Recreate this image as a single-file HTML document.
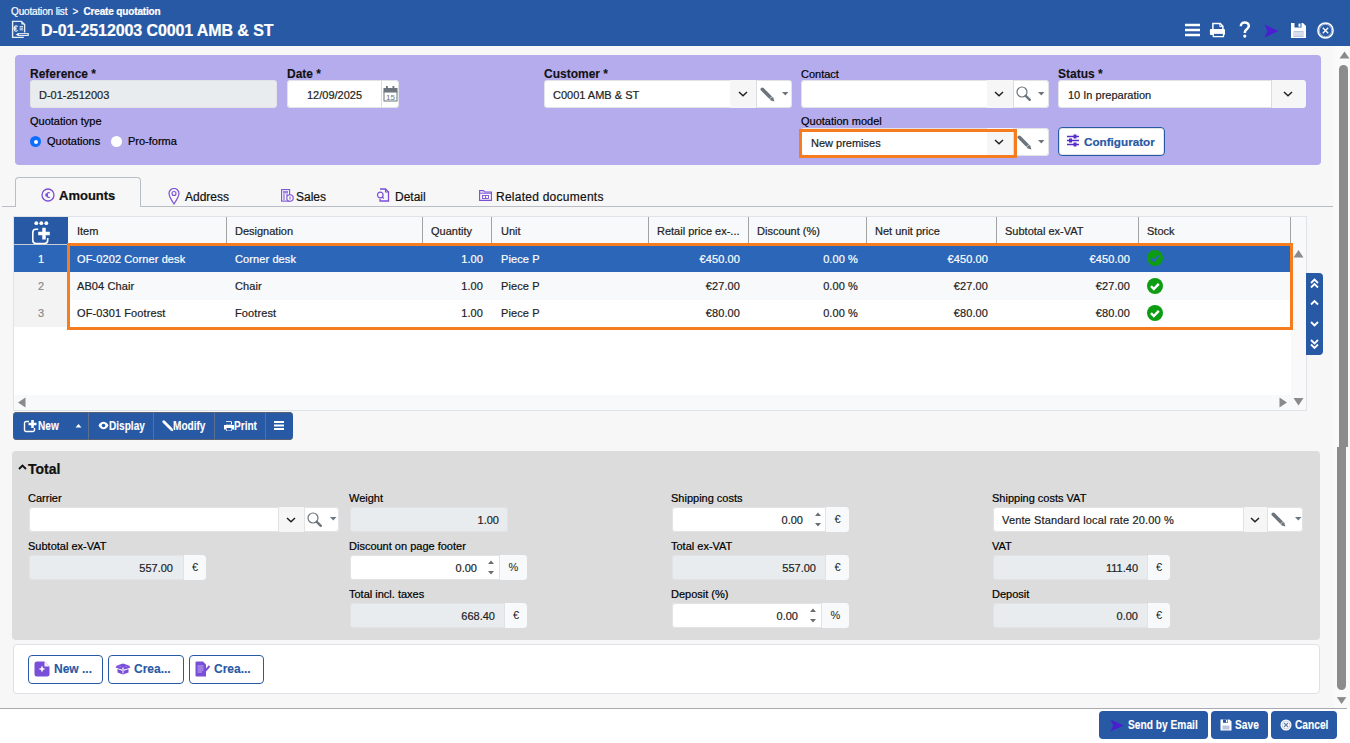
<!DOCTYPE html>
<html><head><meta charset="utf-8">
<style>
*{box-sizing:border-box;margin:0;padding:0}
html,body{width:1350px;height:743px;overflow:hidden}
body{position:relative;background:#fff;font-family:"Liberation Sans",sans-serif;color:#212529}
.a{position:absolute}
#page{position:absolute;left:0;top:0;width:1350px;height:708px;background:#f7f7f7}
#hdr{position:absolute;left:0;top:0;width:1350px;height:46px;background:#2759a5;color:#fff}
.lbl{position:absolute;margin-top:2px;font-size:11px;white-space:nowrap;color:#000}
.lblb{position:absolute;margin-top:2px;font-size:12px;font-weight:bold;white-space:nowrap;color:#111}
.inp{position:absolute;background:#fff;border-radius:4px;box-shadow:inset 0 0 0 1px #e1e3e7;font-size:11px;white-space:nowrap;color:#222}
.ro{background:#e9ecef}
.txt{position:absolute;white-space:nowrap}
.txt,.lbl{-webkit-text-stroke:0.2px currentColor}
.lblb,.tb,.fb,.bb{-webkit-text-stroke:0.1px currentColor}
.inp>.txt{margin-top:1px}
.th{font-size:11px;color:#222}
.td{font-size:11px;letter-spacing:0.1px;margin-top:1.5px}
.tb{font-size:12px;font-weight:bold;color:#fff;transform:scaleX(0.84);transform-origin:0 0;margin-top:-1px}
.bb{font-size:12px;font-weight:bold;color:#2759a5}
.fb{font-size:12px;font-weight:bold;color:#fff;transform:scaleX(0.85);transform-origin:0 0;margin-top:0px}
.dd{position:absolute;top:0;bottom:0;background:#f6f6f6;border-left:1px solid #e2e2e2;border-right:1px solid #e2e2e2}
</style></head><body>
<div id="page">
<div id="hdr">
  <div class="txt" style="left:11px;top:6px;font-size:10px;letter-spacing:-0.15px">Quotation list&nbsp;&nbsp;&gt;&nbsp;&nbsp;<b>Create quotation</b></div>
  <div class="txt" style="left:41px;top:22px;font-size:16px;font-weight:bold;letter-spacing:-0.1px">D-01-2512003 C0001 AMB &amp; ST</div>
<svg class="a" style="left:11px;top:20px" width="19" height="19" viewBox="0 0 19 19" fill="none">
<path d="M13.6 12.5V4.6L10.4 1.4H1.6V17.4H12.8" stroke="#e8edf5" stroke-width="1.4"/>
<path d="M10.4 1.4V4.6H13.6Z" fill="#e8edf5"/>
<path d="M6.6 6.6a2.2 2.6 0 1 0 0 3.8M2.6 7.9H5.6M2.6 9.1H5.6" stroke="#e8edf5" stroke-width="1.1"/>
<path d="M8.6 6.6H12M8.6 8.2H12M8.6 9.8H12" stroke="#e8edf5" stroke-width="1"/>
<path d="M4.6 14.4L7.2 12.9H17.8V15.9H7.2Z" fill="#e8edf5"/><path d="M8 14.4H16.6" stroke="#2759a5" stroke-width="0.9"/>
</svg>
<svg class="a" style="left:1185px;top:23px" width="15" height="14"><path d="M0 2H15M0 7H15M0 12H15" stroke="#fff" stroke-width="2.4"/></svg>
<svg class="a" style="left:1209px;top:22px" width="17" height="16" viewBox="0 0 17 16"><path d="M3.9 7V1.6H11.3L13.9 4.2V7" stroke="#fff" stroke-width="1.5" fill="none"/><path d="M10.8 1.6V4.6H13.9" stroke="#fff" stroke-width="1" fill="none"/><rect x="0.9" y="6.9" width="15.1" height="6.2" rx="1" fill="#fff"/><rect x="4.3" y="11.2" width="10.2" height="3.4" fill="#2759a5" stroke="#fff" stroke-width="1.3"/></svg>
<svg class="a" style="left:1239px;top:21px" width="12" height="17" viewBox="0 0 12 17"><path d="M1.8 5.2C1.8 2.6 3.6 1.4 5.7 1.4S9.8 2.7 9.8 4.9C9.8 7 8.2 7.9 7 8.9C6.1 9.7 5.8 10.3 5.8 12" stroke="#fff" stroke-width="2.5" fill="none"/><circle cx="5.8" cy="15.1" r="1.6" fill="#fff"/></svg>
<svg class="a" style="left:1264px;top:24px" width="15" height="14" viewBox="0 0 15 14"><path d="M0.5 0.5L14.5 7L0.5 13.5L3.5 7Z" fill="#4b1fd0"/></svg>
<svg class="a" style="left:1290px;top:22px" width="17" height="17" viewBox="0 0 17 17"><path d="M1 1H13L16 4V16H1Z" fill="#fff"/><rect x="4.5" y="1" width="7" height="4.5" fill="#2759a5"/><rect x="8.5" y="1.6" width="2" height="3.2" fill="#fff"/><rect x="3.5" y="9" width="10" height="6" fill="#b9c6e0"/><path d="M4 11H13M4 13H13" stroke="#fff" stroke-width="0.8"/></svg>
<svg class="a" style="left:1317px;top:22px" width="17" height="17" viewBox="0 0 17 17"><circle cx="8.5" cy="8.5" r="7.6" stroke="#fff" stroke-width="1.5" fill="none"/><circle cx="8.5" cy="8.5" r="6.2" stroke="#fff" stroke-width="0.6" fill="none"/><path d="M5.8 5.8L11.2 11.2M11.2 5.8L5.8 11.2" stroke="#fff" stroke-width="1.3"/></svg>
</div>

<!-- purple panel -->
<div class="a" style="left:15px;top:55px;width:1306px;height:110px;background:#b4acec;border-radius:4px"></div>
<div class="lblb" style="left:30px;top:65px">Reference *</div>
<div class="inp ro" style="left:30px;top:80px;width:247px;height:28px"><span class="txt" style="left:9px;top:8px">D-01-2512003</span></div>
<div class="lblb" style="left:287px;top:65px">Date *</div>
<div class="inp" style="left:287px;top:80px;width:112px;height:28px"><span class="txt" style="left:20px;top:8px">12/09/2025</span></div>
<div class="lblb" style="left:544px;top:65px">Customer *</div>
<div class="inp" style="left:544px;top:80px;width:248px;height:28px"><span class="txt" style="left:9px;top:8px">C0001 AMB &amp; ST</span></div>
<div class="lbl" style="left:801px;top:66px">Contact</div>
<div class="inp" style="left:801px;top:80px;width:248px;height:28px"></div>
<div class="lblb" style="left:1058px;top:65px">Status *</div>
<div class="inp" style="left:1058px;top:80px;width:248px;height:28px"><span class="txt" style="left:10px;top:8px">10 In preparation</span></div>
<div class="lbl" style="left:30px;top:113px">Quotation type</div>
<div class="lbl" style="left:801px;top:113px">Quotation model</div>
<div class="inp" style="left:801px;top:128px;width:248px;height:28px"><span class="txt" style="left:10px;top:8px">New premises</span></div>
<div class="inp" style="left:1058px;top:127px;width:107px;height:29px;border:1px solid #2759a5;font-weight:bold;font-size:12px;color:#2759a5"><span class="txt" style="left:25px;top:6px;font-size:11.7px">Configurator</span></div>

<div class="dd" style="left:730px;top:80px;width:27px;height:28px;border-right:1px solid #d9dce0;border-left:none"></div>
<svg class="a" style="left:738px;top:91px" width="10" height="6"><path d="M1 1L5 4.8L9 1" stroke="#222" stroke-width="1.5" fill="none"/></svg>
<svg class="a" style="left:760px;top:87px" width="15" height="15" viewBox="0 0 15 15"><path d="M2.3 2.3L11 11" stroke="#6c757d" stroke-width="3.6" stroke-linecap="round"/><path d="M9.3 12.3L12.3 9.3" stroke="#fff" stroke-width="0.7"/><path d="M10.2 13.2L14.4 14.4L13.2 10.2Z" fill="#6c757d"/></svg>
<svg class="a" style="left:782px;top:92px" width="7" height="4"><path d="M0 0H6.5L3.25 3.5Z" fill="#6c757d"/></svg>
<div class="dd" style="left:987px;top:80px;width:27px;height:28px;border-right:1px solid #d9dce0;border-left:none"></div>
<svg class="a" style="left:994px;top:91px" width="10" height="6"><path d="M1 1L5 4.8L9 1" stroke="#222" stroke-width="1.5" fill="none"/></svg>
<svg class="a" style="left:1016px;top:86px" width="16" height="16" viewBox="0 0 16 16"><circle cx="6" cy="6" r="5" stroke="#6c757d" stroke-width="1.2" fill="none"/><path d="M9.8 9.8L13.8 13.8" stroke="#6c757d" stroke-width="2.4" stroke-linecap="round"/></svg>
<svg class="a" style="left:1038px;top:92px" width="7" height="4"><path d="M0 0H6.5L3.25 3.5Z" fill="#6c757d"/></svg>
<div class="dd" style="left:1271px;top:80px;width:35px;height:28px;border-left:1px solid #d9dce0;border-right:none;border-radius:0 4px 4px 0"></div>
<svg class="a" style="left:1283px;top:91px" width="10" height="6"><path d="M1 1L5 4.8L9 1" stroke="#222" stroke-width="1.5" fill="none"/></svg>
<div class="dd" style="left:987px;top:128px;width:27px;height:28px;border-right:1px solid #d9dce0;border-left:none"></div>
<svg class="a" style="left:994px;top:139px" width="10" height="6"><path d="M1 1L5 4.8L9 1" stroke="#222" stroke-width="1.5" fill="none"/></svg>
<svg class="a" style="left:1017px;top:135px" width="15" height="15" viewBox="0 0 15 15"><path d="M2.3 2.3L11 11" stroke="#6c757d" stroke-width="3.6" stroke-linecap="round"/><path d="M9.3 12.3L12.3 9.3" stroke="#fff" stroke-width="0.7"/><path d="M10.2 13.2L14.4 14.4L13.2 10.2Z" fill="#6c757d"/></svg>
<svg class="a" style="left:1038px;top:140px" width="7" height="4"><path d="M0 0H6.5L3.25 3.5Z" fill="#6c757d"/></svg>
<div class="a" style="left:381px;top:80px;width:1px;height:28px;background:#d9dce0"></div>
<svg class="a" style="left:383px;top:86px" width="15" height="16" viewBox="0 0 15 16"><rect x="0.5" y="2" width="14" height="4.5" fill="#6c757d"/><rect x="1" y="6" width="13" height="9" stroke="#6c757d" stroke-width="1" fill="#fff"/><rect x="3" y="0" width="1.8" height="3.5" fill="#6c757d"/><rect x="9.5" y="0" width="1.8" height="3.5" fill="#6c757d"/><text x="7.5" y="14" font-size="8" font-family="Liberation Sans" text-anchor="middle" fill="#6c757d">15</text></svg>
<div class="a" style="left:30px;top:136px;width:11px;height:11px;border-radius:50%;background:#0d6efd"></div><div class="a" style="left:33.5px;top:139.5px;width:4px;height:4px;border-radius:50%;background:#fff"></div>
<div class="lbl" style="left:47px;top:133px">Quotations</div>
<div class="a" style="left:111px;top:136px;width:11px;height:11px;border-radius:50%;background:#fff"></div>
<div class="lbl" style="left:128px;top:133px">Pro-forma</div>
<svg class="a" style="left:1066px;top:134px" width="14" height="13" viewBox="0 0 14 13"><path d="M1 2.5H13M1 6.5H13M1 10.5H13" stroke="#5a2dc9" stroke-width="1.3"/><rect x="7.5" y="0.5" width="3" height="4" fill="#5a2dc9"/><rect x="3" y="4.5" width="3" height="4" fill="#5a2dc9"/><rect x="7.5" y="8.5" width="3" height="4" fill="#5a2dc9"/></svg>
<div class="a" style="left:799px;top:129px;width:218px;height:29px;border:3px solid #f57c1f"></div>
<!-- tabs -->
<div class="a" style="left:2px;top:206px;width:1331px;height:1px;background:#b9bec6"></div>
<div class="a" style="left:15px;top:177px;width:126px;height:30px;background:#f7f7f7;border:1px solid #b9bec6;border-bottom:none;border-radius:4px 4px 0 0"></div>
<div class="txt" style="left:59px;top:188px;font-size:13px;font-weight:bold;color:#111">Amounts</div>
<div class="txt" style="left:185px;top:190px;font-size:12px;color:#111">Address</div>
<div class="txt" style="left:296px;top:190px;font-size:12px;color:#111">Sales</div>
<div class="txt" style="left:395px;top:190px;font-size:12px;color:#111">Detail</div>
<div class="txt" style="left:496px;top:190px;font-size:12px;color:#111;letter-spacing:0.25px">Related documents</div>

<svg class="a" style="left:41px;top:188px" width="14" height="14" viewBox="0 0 14 14"><circle cx="7" cy="7" r="6" stroke="#7a4fd8" stroke-width="1.3" fill="none"/><path d="M8.8 4.8a2.4 2.4 0 1 0 0 4.4M4.3 6.4H7M4.3 7.6H7" stroke="#7a4fd8" stroke-width="1.1" fill="none"/></svg>
<svg class="a" style="left:168px;top:188px" width="12" height="17" viewBox="0 0 12 17"><path d="M6 16C3 11.5 1 8.5 1 5.5a5 5 0 0 1 10 0C11 8.5 9 11.5 6 16Z" stroke="#7a4fd8" stroke-width="1.2" fill="none"/><circle cx="6" cy="5.5" r="2" stroke="#7a4fd8" stroke-width="1.1" fill="none"/></svg>
<svg class="a" style="left:281px;top:189px" width="13" height="13" viewBox="0 0 13 13"><rect x="0.6" y="0.6" width="8" height="11.5" stroke="#7a4fd8" stroke-width="1.1" fill="none"/><rect x="2" y="2" width="5" height="2.5" fill="#7a4fd8" opacity="0.7"/><path d="M2 6H4M5 6H7M2 8H4M2 10H4" stroke="#7a4fd8" stroke-width="1"/><circle cx="9" cy="9" r="3.2" fill="#f7f7f7" stroke="#7a4fd8" stroke-width="1.1"/><path d="M9 7.5V10.5" stroke="#7a4fd8" stroke-width="1"/></svg>
<svg class="a" style="left:376px;top:188px" width="14" height="14" viewBox="0 0 14 14"><path d="M4 1H9.5L12.5 4V13H4V11" stroke="#7a4fd8" stroke-width="1.3" fill="none"/><path d="M9.5 1V4H12.5" stroke="#7a4fd8" stroke-width="1.1" fill="none"/><circle cx="4.3" cy="7" r="2.8" stroke="#7a4fd8" stroke-width="1.2" fill="#f7f7f7"/><path d="M6 8.8L7.8 10.6" stroke="#7a4fd8" stroke-width="1.3"/></svg>
<svg class="a" style="left:479px;top:190px" width="13" height="11" viewBox="0 0 13 11"><path d="M0.6 10.4V0.6H4.5L5.8 2H12.4V10.4Z" stroke="#7a4fd8" stroke-width="1.1" fill="none"/><path d="M0.6 3.2H12.4" stroke="#7a4fd8" stroke-width="1"/><rect x="3.5" y="5.5" width="6" height="3" stroke="#7a4fd8" stroke-width="0.9" fill="none"/><path d="M6.5 5.5V8.5" stroke="#7a4fd8" stroke-width="0.9"/></svg>
<div class="a" style="left:1334px;top:46px;width:16px;height:662px;background:#fafafa"></div>
<svg class="a" style="left:1339px;top:51px" width="11" height="8"><path d="M0.5 7.5L5.5 0.5L10.5 7.5Z" fill="#8a8a8a"/></svg>
<div class="a" style="left:1339px;top:65px;width:9px;height:382px;background:#8c8c8c;border-radius:4.5px 4.5px 0 0"></div><div class="a" style="left:1337px;top:447px;width:9px;height:243px;background:#8c8c8c;border-radius:0 0 4.5px 4.5px"></div>
<svg class="a" style="left:1337px;top:697px" width="10" height="7"><path d="M0.3 0.3L4.6 6.6L8.9 0.3Z" fill="#8a8a8a" stroke="#8a8a8a" stroke-width="0.6" stroke-linejoin="round"/></svg>
<!-- table -->
<div class="a" style="left:13px;top:216px;width:1294px;height:195px;background:#fff;border:1px solid #dfe3e8"></div>
<div class="a" style="left:14px;top:217px;width:1292px;height:27px;background:#f8f9fa"></div>
<div class="a" style="left:14px;top:217px;width:54px;height:27px;background:#2759a5"></div>
<div class="a" style="left:226px;top:217px;width:1px;height:27px;background:#a3a3a3"></div>
<div class="a" style="left:422px;top:217px;width:1px;height:27px;background:#a3a3a3"></div>
<div class="a" style="left:491px;top:217px;width:1px;height:27px;background:#a3a3a3"></div>
<div class="a" style="left:648px;top:217px;width:1px;height:27px;background:#a3a3a3"></div>
<div class="a" style="left:748px;top:217px;width:1px;height:27px;background:#a3a3a3"></div>
<div class="a" style="left:866px;top:217px;width:1px;height:27px;background:#a3a3a3"></div>
<div class="a" style="left:996px;top:217px;width:1px;height:27px;background:#a3a3a3"></div>
<div class="a" style="left:1138px;top:217px;width:1px;height:27px;background:#a3a3a3"></div>
<div class="a" style="left:1290px;top:217px;width:1px;height:27px;background:#a3a3a3"></div>
<div class="txt th" style="left:77px;top:225px">Item</div>
<div class="txt th" style="left:235px;top:225px">Designation</div>
<div class="txt th" style="left:431px;top:225px">Quantity</div>
<div class="txt th" style="left:501px;top:225px">Unit</div>
<div class="txt th" style="left:657px;top:225px">Retail price ex-...</div>
<div class="txt th" style="left:757px;top:225px">Discount (%)</div>
<div class="txt th" style="left:875px;top:225px">Net unit price</div>
<div class="txt th" style="left:1005px;top:225px">Subtotal ex-VAT</div>
<div class="txt th" style="left:1147px;top:225px">Stock</div>
<div class="a" style="left:14px;top:244px;width:1277px;height:1px;background:#c9ccd1"></div>
<div class="a" style="left:14px;top:245px;width:1277px;height:27px;background:#2b66b8"></div>
<div class="a" style="left:14px;top:245px;width:54px;height:27px;background:#2b66b8"></div>
<div class="txt td" style="left:14px;width:54px;text-align:center;top:251px;color:#fff">1</div>
<div class="txt td" style="left:77px;top:251px;color:#fff">OF-0202 Corner desk</div>
<div class="txt td" style="left:235px;top:251px;color:#fff">Corner desk</div>
<div class="txt td" style="left:501px;top:251px;color:#fff">Piece P</div>
<div class="txt td" style="left:333px;width:150px;text-align:right;top:251px;color:#fff">1.00</div>
<div class="txt td" style="left:590px;width:150px;text-align:right;top:251px;color:#fff">€450.00</div>
<div class="txt td" style="left:708px;width:150px;text-align:right;top:251px;color:#fff">0.00 %</div>
<div class="txt td" style="left:838px;width:150px;text-align:right;top:251px;color:#fff">€450.00</div>
<div class="txt td" style="left:980px;width:150px;text-align:right;top:251px;color:#fff">€450.00</div>
<svg class="a" style="left:1147px;top:250px" width="16" height="16" viewBox="0 0 16 16"><circle cx="8" cy="8" r="8" fill="#0e9c12"/><path d="M4 8.2l2.8 2.8 5-5.2" stroke="#2b66b8" stroke-width="2.2" fill="none"/></svg>
<div class="a" style="left:68px;top:272px;width:1223px;height:28px;background:#f8f9fa"></div>
<div class="a" style="left:14px;top:272px;width:54px;height:28px;background:#f3f3f3"></div>
<div class="txt td" style="left:14px;width:54px;text-align:center;top:278px;color:#8a8a8a">2</div>
<div class="txt td" style="left:77px;top:278px;color:#222">AB04 Chair</div>
<div class="txt td" style="left:235px;top:278px;color:#222">Chair</div>
<div class="txt td" style="left:501px;top:278px;color:#222">Piece P</div>
<div class="txt td" style="left:333px;width:150px;text-align:right;top:278px;color:#222">1.00</div>
<div class="txt td" style="left:590px;width:150px;text-align:right;top:278px;color:#222">€27.00</div>
<div class="txt td" style="left:708px;width:150px;text-align:right;top:278px;color:#222">0.00 %</div>
<div class="txt td" style="left:838px;width:150px;text-align:right;top:278px;color:#222">€27.00</div>
<div class="txt td" style="left:980px;width:150px;text-align:right;top:278px;color:#222">€27.00</div>
<svg class="a" style="left:1147px;top:278px" width="16" height="16" viewBox="0 0 16 16"><circle cx="8" cy="8" r="8" fill="#0e9c12"/><path d="M4 8.2l2.8 2.8 5-5.2" stroke="#fff" stroke-width="2.4" fill="none"/></svg>
<div class="a" style="left:68px;top:300px;width:1223px;height:27px;background:#ffffff"></div>
<div class="a" style="left:14px;top:300px;width:54px;height:27px;background:#f3f3f3"></div>
<div class="txt td" style="left:14px;width:54px;text-align:center;top:305px;color:#8a8a8a">3</div>
<div class="txt td" style="left:77px;top:305px;color:#222">OF-0301 Footrest</div>
<div class="txt td" style="left:235px;top:305px;color:#222">Footrest</div>
<div class="txt td" style="left:501px;top:305px;color:#222">Piece P</div>
<div class="txt td" style="left:333px;width:150px;text-align:right;top:305px;color:#222">1.00</div>
<div class="txt td" style="left:590px;width:150px;text-align:right;top:305px;color:#222">€80.00</div>
<div class="txt td" style="left:708px;width:150px;text-align:right;top:305px;color:#222">0.00 %</div>
<div class="txt td" style="left:838px;width:150px;text-align:right;top:305px;color:#222">€80.00</div>
<div class="txt td" style="left:980px;width:150px;text-align:right;top:305px;color:#222">€80.00</div>
<svg class="a" style="left:1147px;top:305px" width="16" height="16" viewBox="0 0 16 16"><circle cx="8" cy="8" r="8" fill="#0e9c12"/><path d="M4 8.2l2.8 2.8 5-5.2" stroke="#fff" stroke-width="2.4" fill="none"/></svg>
<svg class="a" style="left:31px;top:220px" width="21" height="25" viewBox="0 0 21 25">
<circle cx="5.3" cy="3.2" r="1.9" fill="#fff"/><circle cx="10.3" cy="3.2" r="1.9" fill="#fff"/><circle cx="15.3" cy="3.2" r="1.9" fill="#fff"/>
<path d="M7.2 9.2 H5 a3.2 3.2 0 0 0 -3.2 3.2 V20.3 a3.2 3.2 0 0 0 3.2 3.2 H13.5 a3.2 3.2 0 0 0 3.2 -3.2 V18" stroke="#fff" stroke-width="1.6" fill="none"/>
<path d="M13 7.8 V19.4 M7.2 13.6 H18.8" stroke="#2759a5" stroke-width="5.6" fill="none"/><path d="M13 7.8 V19.4 M7.2 13.6 H18.8" stroke="#fff" stroke-width="3.5" fill="none"/></svg>
<div class="a" style="left:1291px;top:244px;width:15px;height:166px;background:#f9f9f9"></div>
<svg class="a" style="left:1293px;top:249px" width="11" height="9"><path d="M0.5 8.5 L5.5 1 L10.5 8.5Z" fill="#8a8a8a"/></svg>
<svg class="a" style="left:1293px;top:397px" width="11" height="9"><path d="M0.5 1 L5.5 8.5 L10.5 1Z" fill="#8a8a8a"/></svg>
<div class="a" style="left:14px;top:395px;width:1277px;height:15px;background:#f8f9fa"></div>
<svg class="a" style="left:17px;top:397px" width="9" height="11"><path d="M8.5 0.5 L1 5.5 L8.5 10.5Z" fill="#8a8a8a"/></svg>
<svg class="a" style="left:1279px;top:397px" width="9" height="11"><path d="M0.5 0.5 L8 5.5 L0.5 10.5Z" fill="#8a8a8a"/></svg>
<div class="a" style="left:1306px;top:273px;width:17px;height:82px;background:#2759a5;border-radius:0 4px 4px 0"></div>
<svg class="a" style="left:1306px;top:273px" width="17" height="82" viewBox="0 0 17 82" fill="none" stroke="#fff" stroke-width="1.8">
<path d="M5 10 L8.5 6.5 L12 10 M5 14.5 L8.5 11 L12 14.5"/>
<path d="M5 31.5 L8.5 28 L12 31.5"/>
<path d="M5 49 L8.5 52.5 L12 49"/>
<path d="M5 67 L8.5 70.5 L12 67 M5 71.5 L8.5 75 L12 71.5"/></svg>
<div class="a" style="left:67px;top:243px;width:1226px;height:87px;border:3px solid #f57c1f"></div>
<!--TABLEEND-->
<div class="a" style="left:13px;top:412px;width:280px;height:28px;background:#2759a5;border-radius:4px;box-shadow:inset 0 1px 0 #5a6272,inset 0 -1px 0 #5a6272"></div>
<div class="a" style="left:88px;top:412px;width:1px;height:28px;background:#5b6f8f"></div>
<div class="a" style="left:153px;top:412px;width:1px;height:28px;background:#5b6f8f"></div>
<div class="a" style="left:214px;top:412px;width:1px;height:28px;background:#5b6f8f"></div>
<div class="a" style="left:265px;top:412px;width:1px;height:28px;background:#5b6f8f"></div>
<div class="txt tb" style="left:38px;top:420px">New</div>
<div class="txt tb" style="left:109px;top:420px">Display</div>
<div class="txt tb" style="left:173px;top:420px">Modify</div>
<div class="txt tb" style="left:234px;top:420px">Print</div>
<svg class="a" style="left:23px;top:419px" width="15" height="14" viewBox="0 0 15 14"><path d="M6 2.5H3a1.5 1.5 0 0 0-1.5 1.5v7a1.5 1.5 0 0 0 1.5 1.5h7a1.5 1.5 0 0 0 1.5-1.5V9" stroke="#fff" stroke-width="1.4" fill="none"/><path d="M9.5 1v8M5.5 5h8" stroke="#fff" stroke-width="2.6"/></svg>
<svg class="a" style="left:75px;top:423px" width="7" height="5"><path d="M0.5 4.5L3.5 1L6.5 4.5Z" fill="#fff"/></svg>
<svg class="a" style="left:98px;top:421px" width="11" height="9" viewBox="0 0 11 9"><path d="M0.5 4.5C2 1.5 4 0.8 5.5 0.8S9 1.5 10.5 4.5C9 7.5 7 8.2 5.5 8.2S2 7.5 0.5 4.5Z" fill="#fff"/><circle cx="5.5" cy="4.5" r="1.8" fill="#2759a5"/></svg>
<svg class="a" style="left:162px;top:420px" width="12" height="12" viewBox="0 0 12 12"><path d="M1.8 1.8L8.6 8.6" stroke="#fff" stroke-width="2.8" stroke-linecap="round"/><path d="M8.2 10.4L11.3 11.3L10.4 8.2Z" fill="#fff"/></svg>
<svg class="a" style="left:223px;top:420px" width="12" height="12" viewBox="0 0 12 12"><path d="M3 4.5V1h5l1 1v2.5M1 5h10v4.5H9V11H3V9.5H1Z" fill="#fff"/><rect x="3.6" y="8" width="4.8" height="2.6" fill="#2759a5"/><rect x="3" y="1.8" width="5" height="2.6" fill="#2759a5"/></svg>
<svg class="a" style="left:273px;top:420px" width="12" height="11"><path d="M1 2H11M1 5.5H11M1 9H11" stroke="#fff" stroke-width="2"/></svg>
<div class="a" style="left:12px;top:451px;width:1308px;height:189px;background:#dcdcdc;border-radius:4px"></div>
<svg class="a" style="left:18px;top:464px" width="9" height="6"><path d="M1 5L4.5 1.5L8 5" stroke="#111" stroke-width="1.8" fill="none"/></svg><div class="txt" style="left:28px;top:461px;font-size:14px;font-weight:bold;color:#111">Total</div>
<div class="a" style="left:13px;top:644px;width:1307px;height:50px;background:#fff;border:1px solid #dde1e6;border-radius:4px"></div>
<div class="a" style="left:28px;top:655px;width:75px;height:29px;border:1px solid #2759a5;border-radius:4px;background:#fff"></div>
<div class="a" style="left:108px;top:655px;width:76px;height:29px;border:1px solid #2759a5;border-radius:4px;background:#fff"></div>
<div class="a" style="left:189px;top:655px;width:75px;height:29px;border:1px solid #2759a5;border-radius:4px;background:#fff"></div>
<div class="txt bb" style="left:54px;top:662px">New ...</div>
<div class="txt bb" style="left:134px;top:662px">Crea...</div>
<div class="txt bb" style="left:214px;top:662px">Crea...</div>
<div class="a" style="left:0;top:708px;width:1347px;height:1px;background:#a9abae"></div>
<div class="a" style="left:1099px;top:711px;width:109px;height:28px;background:#2759a5;border-radius:4px"></div>
<div class="a" style="left:1211px;top:711px;width:57px;height:28px;background:#2759a5;border-radius:4px"></div>
<div class="a" style="left:1271px;top:711px;width:66px;height:28px;background:#2759a5;border-radius:4px"></div>
<div class="txt fb" style="left:1128px;top:718px">Send by Email</div>
<div class="txt fb" style="left:1235px;top:718px">Save</div>
<div class="txt fb" style="left:1295px;top:718px">Cancel</div>
<!--TOTALEND-->
<div class="lbl" style="left:28px;top:490px">Carrier</div>
<div class="inp" style="left:29px;top:507px;width:310px;height:25px"></div>
<div class="dd" style="left:278px;top:507px;width:27px;height:25px"></div>
<!--CARRIERICONS-->
<div class="lbl" style="left:28px;top:538px">Subtotal ex-VAT</div>
<div class="inp" style="left:29px;top:555px;width:177px;height:25px;background:#e9ecef"></div>
<div class="a" style="left:183px;top:555px;width:23px;height:25px;background:#f8f9fa;border-left:1px solid #dfe2e6;border-radius:0 4px 4px 0;font-size:11px;text-align:center;line-height:25px;color:#222">€</div>
<div class="txt" style="left:73px;width:100px;text-align:right;top:562px;font-size:11px;color:#222">557.00</div>
<div class="lbl" style="left:349px;top:490px">Weight</div>
<div class="inp" style="left:350px;top:507px;width:158px;height:25px;background:#e9ecef"></div>
<div class="txt" style="left:399px;width:100px;text-align:right;top:514px;font-size:11px;color:#222">1.00</div>
<div class="lbl" style="left:349px;top:538px">Discount on page footer</div>
<div class="inp" style="left:350px;top:555px;width:177px;height:25px;background:#fff"></div>
<div class="a" style="left:499px;top:555px;width:28px;height:25px;background:#f8f9fa;border-left:1px solid #dfe2e6;border-radius:0 4px 4px 0;font-size:11px;text-align:center;line-height:25px;color:#222">%</div>
<div class="txt" style="left:377px;width:100px;text-align:right;top:562px;font-size:11px;color:#222">0.00</div>
<svg class="a" style="left:487px;top:559px" width="8" height="17"><path d="M1 5L4 1.5L7 5Z M1 12L4 15.5L7 12Z" fill="#6d6d6d"/></svg>
<div class="lbl" style="left:349px;top:586px">Total incl. taxes</div>
<div class="inp" style="left:350px;top:603px;width:177px;height:25px;background:#e9ecef"></div>
<div class="a" style="left:504px;top:603px;width:23px;height:25px;background:#f8f9fa;border-left:1px solid #dfe2e6;border-radius:0 4px 4px 0;font-size:11px;text-align:center;line-height:25px;color:#222">€</div>
<div class="txt" style="left:395px;width:100px;text-align:right;top:610px;font-size:11px;color:#222">668.40</div>
<div class="lbl" style="left:671px;top:490px">Shipping costs</div>
<div class="inp" style="left:672px;top:507px;width:177px;height:25px;background:#fff"></div>
<div class="a" style="left:825px;top:507px;width:24px;height:25px;background:#f8f9fa;border-left:1px solid #dfe2e6;border-radius:0 4px 4px 0;font-size:11px;text-align:center;line-height:25px;color:#222">€</div>
<div class="txt" style="left:703px;width:100px;text-align:right;top:514px;font-size:11px;color:#222">0.00</div>
<svg class="a" style="left:814px;top:511px" width="8" height="17"><path d="M1 5L4 1.5L7 5Z M1 12L4 15.5L7 12Z" fill="#6d6d6d"/></svg>
<div class="lbl" style="left:671px;top:538px">Total ex-VAT</div>
<div class="inp" style="left:672px;top:555px;width:177px;height:25px;background:#e9ecef"></div>
<div class="a" style="left:825px;top:555px;width:24px;height:25px;background:#f8f9fa;border-left:1px solid #dfe2e6;border-radius:0 4px 4px 0;font-size:11px;text-align:center;line-height:25px;color:#222">€</div>
<div class="txt" style="left:716px;width:100px;text-align:right;top:562px;font-size:11px;color:#222">557.00</div>
<div class="lbl" style="left:671px;top:586px">Deposit (%)</div>
<div class="inp" style="left:672px;top:603px;width:177px;height:25px;background:#fff"></div>
<div class="a" style="left:821px;top:603px;width:28px;height:25px;background:#f8f9fa;border-left:1px solid #dfe2e6;border-radius:0 4px 4px 0;font-size:11px;text-align:center;line-height:25px;color:#222">%</div>
<div class="txt" style="left:698px;width:100px;text-align:right;top:610px;font-size:11px;color:#222">0.00</div>
<svg class="a" style="left:809px;top:607px" width="8" height="17"><path d="M1 5L4 1.5L7 5Z M1 12L4 15.5L7 12Z" fill="#6d6d6d"/></svg>
<div class="lbl" style="left:992px;top:490px">Shipping costs VAT</div>
<div class="inp" style="left:993px;top:507px;width:310px;height:25px"><span class="txt" style="left:9px;top:6px;font-size:11px;letter-spacing:0.15px">Vente Standard local rate 20.00 %</span></div>
<div class="dd" style="left:1243px;top:507px;width:25px;height:25px"></div>
<!--VATICONS-->
<div class="lbl" style="left:992px;top:538px">VAT</div>
<div class="inp" style="left:993px;top:555px;width:177px;height:25px;background:#e9ecef"></div>
<div class="a" style="left:1147px;top:555px;width:23px;height:25px;background:#f8f9fa;border-left:1px solid #dfe2e6;border-radius:0 4px 4px 0;font-size:11px;text-align:center;line-height:25px;color:#222">€</div>
<div class="txt" style="left:1038px;width:100px;text-align:right;top:562px;font-size:11px;color:#222">111.40</div>
<div class="lbl" style="left:992px;top:586px">Deposit</div>
<div class="inp" style="left:993px;top:603px;width:177px;height:25px;background:#e9ecef"></div>
<div class="a" style="left:1147px;top:603px;width:23px;height:25px;background:#f8f9fa;border-left:1px solid #dfe2e6;border-radius:0 4px 4px 0;font-size:11px;text-align:center;line-height:25px;color:#222">€</div>
<div class="txt" style="left:1038px;width:100px;text-align:right;top:610px;font-size:11px;color:#222">0.00</div>
<svg class="a" style="left:286px;top:517px" width="10" height="6"><path d="M1 1L5 4.8L9 1" stroke="#222" stroke-width="1.5" fill="none"/></svg>
<svg class="a" style="left:307px;top:512px" width="16" height="16" viewBox="0 0 16 16"><circle cx="6" cy="6" r="5" stroke="#6c757d" stroke-width="1.2" fill="none"/><path d="M9.8 9.8L13.8 13.8" stroke="#6c757d" stroke-width="2.4" stroke-linecap="round"/></svg>
<svg class="a" style="left:330px;top:517px" width="7" height="4"><path d="M0 0H6.5L3.25 3.5Z" fill="#6c757d"/></svg>
<svg class="a" style="left:1250px;top:517px" width="10" height="6"><path d="M1 1L5 4.8L9 1" stroke="#222" stroke-width="1.5" fill="none"/></svg>
<svg class="a" style="left:1271px;top:512px" width="15" height="15" viewBox="0 0 15 15"><path d="M2.3 2.3L11 11" stroke="#6c757d" stroke-width="3.6" stroke-linecap="round"/><path d="M9.3 12.3L12.3 9.3" stroke="#fff" stroke-width="0.7"/><path d="M10.2 13.2L14.4 14.4L13.2 10.2Z" fill="#6c757d"/></svg>
<svg class="a" style="left:1295px;top:517px" width="7" height="4"><path d="M0 0H6.5L3.25 3.5Z" fill="#6c757d"/></svg>
<svg class="a" style="left:34px;top:661px" width="16" height="16" viewBox="0 0 16 16"><path d="M3 0.5H10.5L15.5 5.5V13a2.5 2.5 0 0 1-2.5 2.5H3A2.5 2.5 0 0 1 0.5 13V3A2.5 2.5 0 0 1 3 0.5Z" fill="#7a4fd8"/><path d="M10.5 0.5V5.5H15.5" fill="#fff" opacity="0.9"/><path d="M8 5.5V10.5M5.5 8H10.5" stroke="#fff" stroke-width="1.6"/></svg>
<svg class="a" style="left:115px;top:663px" width="16" height="12" viewBox="0 0 16 12"><path d="M8 0.5L14 2.5L8 4.5L2 2.5Z" fill="#7a4fd8"/><path d="M0.5 4.5L2 2.5L8 4.5L6.5 6.5Z M15.5 4.5L14 2.5L8 4.5L9.5 6.5Z" fill="#7a4fd8"/><path d="M2.5 6V9.5L8 11.5L13.5 9.5V6L9.5 7.5L8 5.5L6.5 7.5Z" fill="#7a4fd8"/><path d="M8 6.5V10.5M6.5 8L8 6.5L9.5 8" stroke="#fff" stroke-width="1"/></svg>
<svg class="a" style="left:195px;top:661px" width="16" height="16" viewBox="0 0 16 16"><path d="M0.5 1.5a1 1 0 0 1 1-1H8L11 3.5V15.5H1.5a1 1 0 0 1-1-1Z" fill="#7a4fd8"/><path d="M2.5 5H8.5M2.5 7H8.5M2.5 9H8.5M2.5 11H7" stroke="#c9b6f2" stroke-width="0.9"/><path d="M8 12.5L14.5 5" stroke="#7a4fd8" stroke-width="2"/><path d="M6.8 14L7.5 12L8.8 13.2Z" fill="#7a4fd8"/></svg>
<svg class="a" style="left:1110px;top:719px" width="14" height="13" viewBox="0 0 14 13"><path d="M0.5 0.5L13.5 6.5L0.5 12.5L3.2 6.5Z" fill="#4b1fd0"/></svg>
<svg class="a" style="left:1220px;top:719px" width="12" height="12" viewBox="0 0 12 12"><path d="M0.5 0.5H9.5L11.5 2.5V11.5H0.5Z" fill="#fff"/><rect x="3" y="0.5" width="5" height="3.3" fill="#2759a5"/><rect x="6" y="1" width="1.4" height="2.3" fill="#fff"/><rect x="2.5" y="6.5" width="7" height="4" fill="#b9c6e0"/></svg>
<svg class="a" style="left:1280px;top:719px" width="12" height="12" viewBox="0 0 12 12"><circle cx="6" cy="6" r="5.5" fill="#fff"/><circle cx="6" cy="6" r="4" fill="none" stroke="#b9c6e0" stroke-width="0.8"/><path d="M4 4L8 8M8 4L4 8" stroke="#6c7fa8" stroke-width="1.2"/></svg>
<!--FIELDSEND-->

</div>
</body></html>
